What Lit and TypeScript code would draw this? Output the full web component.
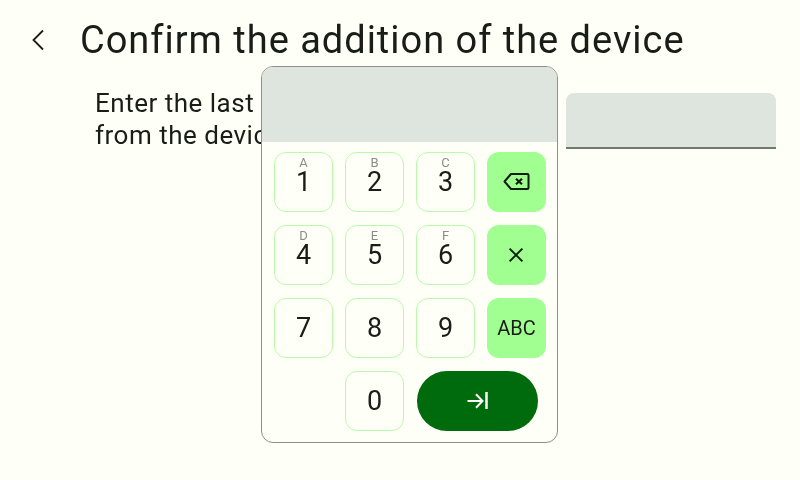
import { LitElement, html, css, svg } from "lit";
import { customElement } from "lit/decorators.js";

const backspace = svg`<svg width="28" height="28" viewBox="0 0 28 28" fill="none" stroke="#10200e" stroke-width="2"><path d="M8 6H24.500a1 1 0 0 1 1 1V20a1 1 0 0 1-1 1H8L1.500 13.500Z" stroke-linejoin="round"/><path d="M13 10.700l6 5.600M19 10.700l-6 5.600" stroke-width="2.200"/></svg>`;
const close = svg`<svg width="24" height="24" viewBox="0 0 24 24" fill="none" stroke="#10200e" stroke-width="2"><path d="M4.600 5.600l12.800 12.800M17.400 5.600L4.600 18.400"/></svg>`;
const tab = svg`<svg width="24" height="24" viewBox="0 0 24 24" fill="none" stroke="#fff" stroke-width="2"><path d="M1.500 12H16M10 5.300L16.500 12 10 18.700"/><path d="M20.500 3V20" stroke-width="2.500"/></svg>`;

@customElement("app-root")
export class AppRoot extends LitElement {
  static styles = css`
    :host {
      display: block;
      position: relative;
      width: 800px;
      height: 480px;
      overflow: hidden;
      background: #fefff7;
      color: #1a1c18;
      font-family: Roboto, sans-serif;
    }
    .head {
      display: flex;
      align-items: center;
      height: 80px;
      padding-left: 18px;
      gap: 22px;
    }
    .back {
      width: 40px;
      height: 40px;
      display: flex;
      align-items: center;
      justify-content: center;
    }
    h1 {
      margin: 0;
      font-size: 38px;
      font-weight: 400;
      letter-spacing: 0.98px;
      line-height: 44px;
      will-change: transform;
    }
    .body {
      display: flex;
      justify-content: space-between;
      padding: 7px 24px 0 95px;
    }
    .msg {
      margin: 0;
      font-size: 26px;
      line-height: 32px;
      letter-spacing: 0.5px;
      will-change: transform;
    }
    .field {
      width: 210px;
      height: 54px;
      margin-top: 6px;
      background: #dde5de;
      border-bottom: 2px solid #72796f;
      border-radius: 8px 8px 0 0;
    }
    .pad {
      position: absolute;
      left: 261px;
      top: 66px;
      width: 295px;
      height: 375px;
      background: #fefff7;
      border: 1px solid #8c9087;
      border-radius: 12px;
      overflow: hidden;
    }
    .display {
      height: 75px;
      background: #dde5de;
    }
    .keys {
      display: grid;
      grid-template-columns: repeat(4, 59px);
      grid-auto-rows: 60px;
      column-gap: 12px;
      row-gap: 13px;
      padding: 10px 0 0 12px;
      will-change: transform;
    }
    .key {
      box-sizing: border-box;
      position: relative;
      display: flex;
      align-items: center;
      justify-content: center;
      border: 1px solid #b9f9ab;
      border-radius: 12px;
      font-size: 27px;
      line-height: 22px;
    }
    .key small {
      position: absolute;
      top: 3px;
      left: 0;
      right: 0;
      text-align: center;
      font-size: 13px;
      line-height: 13px;
      color: #8a8d86;
    }
    .fn {
      border: 0;
      background: #a0ff90;
      font-size: 20px;
    }
    .zero {
      grid-column: 2;
    }
    .enter {
      grid-column: 3 / span 2;
      width: 121px;
      margin-left: 1px;
      border: 0;
      border-radius: 30px;
      background: #006b0c;
    }
  `;

  private digit(n: string, sub = "", cls = "") {
    return html`<div class="key ${cls}">
      ${sub ? html`<small>${sub}</small>` : ""}<span>${n}</span>
    </div>`;
  }

  render() {
    return html`
      <header class="head">
        <div class="back">
          <svg width="24" height="24" viewBox="0 0 24 24" fill="none" stroke="#1a1c18" stroke-width="1.800">
            <path d="M17 2.500L7.500 12l9.500 9.500" />
          </svg>
        </div>
        <h1>Confirm the addition of the device</h1>
      </header>
      <div class="body">
        <p class="msg">Enter the last 6 digits of the code<br />from the device</p>
        <div class="field"></div>
      </div>
      <div class="pad">
        <div class="display"></div>
        <div class="keys">
          ${this.digit("1", "A")}${this.digit("2", "B")}${this.digit("3", "C")}
          <div class="key fn">${backspace}</div>
          ${this.digit("4", "D")}${this.digit("5", "E")}${this.digit("6", "F")}
          <div class="key fn">${close}</div>
          ${this.digit("7")}${this.digit("8")}${this.digit("9")}
          <div class="key fn">ABC</div>
          ${this.digit("0", "", "zero")}
          <div class="key enter">${tab}</div>
        </div>
      </div>
    `;
  }
}
